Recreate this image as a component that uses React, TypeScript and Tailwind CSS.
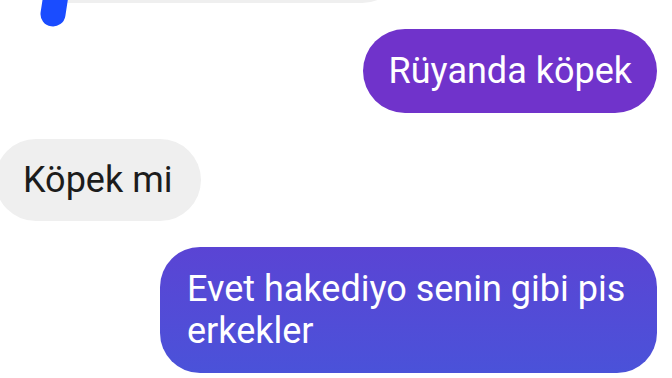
import React from 'react';

const font = { fontFamily: 'Roboto, "Noto Sans", sans-serif' };

export default function App() {
  return (
    <div className="relative w-[672px] h-[378px] overflow-hidden bg-white" style={font}>
      <div className="flex flex-col gap-[26px] pr-[15px]">
        {/* previous message, cut off at the top */}
        <div className="-mt-[81px] ml-[24px] w-[380px] h-[84px] rounded-[42px] bg-[#efefef]" />

        <div className="self-end rounded-[42px] bg-[#7033cb] pl-[26px] pr-[25px] py-[21px] text-[36px] leading-[42px] text-white">
          Rüyanda köpek
        </div>

        <div className="self-start -ml-[5px] rounded-[42px] bg-[#efefef] pl-[28px] pr-[29px] py-[20px] text-[36px] leading-[42px] text-[#1c1c1c]">
          Köpek mi
        </div>

        <div className="self-end max-w-[497px] rounded-[40px] bg-gradient-to-b from-[#5a44d4] to-[#4a52d9] pl-[27px] pr-[30px] py-[21px] text-[36px] leading-[42px] text-white">
          Evet hakediyo senin gibi pis erkekler
        </div>
      </div>

      {/* blue pen mark */}
      <svg className="absolute left-0 top-0" width="90" height="40" viewBox="0 0 90 40">
        <path d="M57 -12 L53 14" stroke="#1a4cff" strokeWidth="25" strokeLinecap="round" fill="none" />
      </svg>
    </div>
  );
}
